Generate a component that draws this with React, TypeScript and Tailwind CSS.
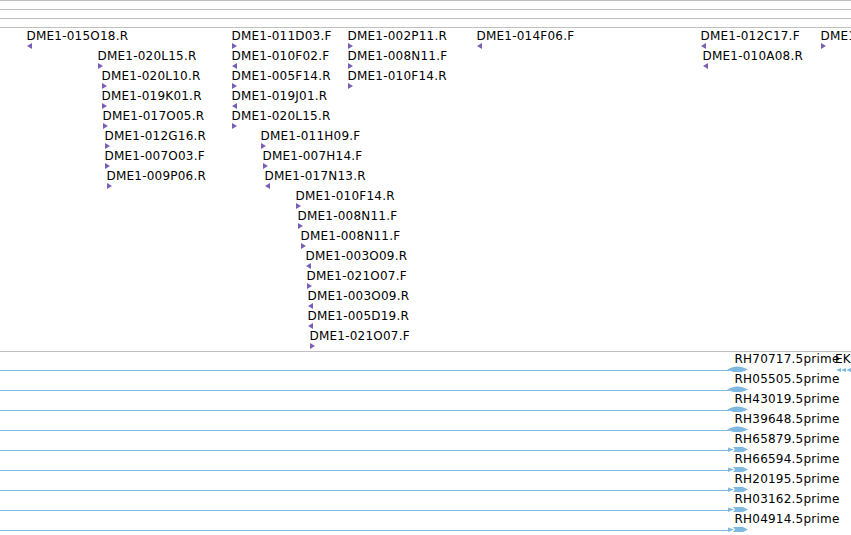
type Dir = 'L' | 'R'
type Clone = { x: number; name: string; dir: Dir }

// clone ends, placed by genome coordinate (x in px on the track canvas)
const cloneRows: Clone[][] = [
  [
    { x: 27, name: 'DME1-015O18.R', dir: 'L' },
    { x: 232, name: 'DME1-011D03.F', dir: 'R' },
    { x: 348, name: 'DME1-002P11.R', dir: 'R' },
    { x: 477, name: 'DME1-014F06.F', dir: 'L' },
    { x: 701, name: 'DME1-012C17.F', dir: 'L' },
    { x: 821, name: 'DME1-018B09.F', dir: 'R' },
  ],
  [
    { x: 98, name: 'DME1-020L15.R', dir: 'R' },
    { x: 232, name: 'DME1-010F02.F', dir: 'L' },
    { x: 348, name: 'DME1-008N11.F', dir: 'R' },
    { x: 703, name: 'DME1-010A08.R', dir: 'L' },
  ],
  [
    { x: 102, name: 'DME1-020L10.R', dir: 'R' },
    { x: 232, name: 'DME1-005F14.R', dir: 'R' },
    { x: 348, name: 'DME1-010F14.R', dir: 'R' },
  ],
  [
    { x: 102, name: 'DME1-019K01.R', dir: 'R' },
    { x: 232, name: 'DME1-019J01.R', dir: 'L' },
  ],
  [
    { x: 103, name: 'DME1-017O05.R', dir: 'R' },
    { x: 232, name: 'DME1-020L15.R', dir: 'R' },
  ],
  [
    { x: 105, name: 'DME1-012G16.R', dir: 'R' },
    { x: 261, name: 'DME1-011H09.F', dir: 'R' },
  ],
  [
    { x: 105, name: 'DME1-007O03.F', dir: 'R' },
    { x: 263, name: 'DME1-007H14.F', dir: 'R' },
  ],
  [
    { x: 107, name: 'DME1-009P06.R', dir: 'R' },
    { x: 265, name: 'DME1-017N13.R', dir: 'L' },
  ],
  [{ x: 296, name: 'DME1-010F14.R', dir: 'R' }],
  [{ x: 298, name: 'DME1-008N11.F', dir: 'R' }],
  [{ x: 301, name: 'DME1-008N11.F', dir: 'R' }],
  [{ x: 306, name: 'DME1-003O09.R', dir: 'L' }],
  [{ x: 307, name: 'DME1-021O07.F', dir: 'R' }],
  [{ x: 308, name: 'DME1-003O09.R', dir: 'L' }],
  [{ x: 308, name: 'DME1-005D19.R', dir: 'L' }],
  [{ x: 310, name: 'DME1-021O07.F', dir: 'R' }],
]

const ests: { name: string; shape: 'lens' | 'arrow' }[] = [
  { name: 'RH70717.5prime', shape: 'lens' },
  { name: 'RH05505.5prime', shape: 'lens' },
  { name: 'RH43019.5prime', shape: 'lens' },
  { name: 'RH39648.5prime', shape: 'lens' },
  { name: 'RH65879.5prime', shape: 'arrow' },
  { name: 'RH66594.5prime', shape: 'arrow' },
  { name: 'RH20195.5prime', shape: 'arrow' },
  { name: 'RH03162.5prime', shape: 'arrow' },
  { name: 'RH04914.5prime', shape: 'arrow' },
]

const font = { fontFamily: '"DejaVu Sans", Verdana, sans-serif' }
const label = 'absolute whitespace-nowrap text-[12px] leading-[14px] tracking-[0.22px] text-black'

function Tri({ x, dir }: { x: number; dir: Dir }) {
  return (
    <svg width="6" height="6" viewBox="0 0 6 6" className="absolute top-[15px]" style={{ left: x }}>
      <polygon points={dir === 'R' ? '0,0 5,3 0,6' : '5,0 0,3 5,6'} fill="#7a5fb9" />
    </svg>
  )
}

function CloneRow({ clones }: { clones: Clone[] }) {
  return (
    <div className="relative h-[20px]">
      {clones.map((c, i) => (
        <div key={i}>
          <span className={`${label} top-[1px]`} style={{ left: c.x - 0.5 }}>
            {c.name}
          </span>
          <Tri x={c.x} dir={c.dir} />
        </div>
      ))}
    </div>
  )
}

function EstRow({ name, shape, first }: { name: string; shape: 'lens' | 'arrow'; first: boolean }) {
  return (
    <div className="relative h-[20px]">
      <svg width="851" height="20" className="absolute left-0 top-0">
        <rect x="0" y="18" width="729" height="1" fill="#80b9e0" />
        {shape === 'lens' ? (
          <path d="M727 17.5 Q733 14.5 737.5 14.5 Q742 14.5 748 17.5 Q742 20.5 737.5 20.5 Q733 20.5 727 17.5 Z" fill="#80b9e0" />
        ) : (
          <>
            <polygon points="728,15.5 734,17.5 728,20" fill="#80b9e0" />
            <polygon points="733,15 743,15 748,17.5 743,20 733,20 735,17.5" fill="#80b9e0" />
          </>
        )}
        {first && (
          <>
            <polygon points="836,18 841,16 841,20" fill="#80b9e0" />
            <polygon points="841,18 846,16 846,20" fill="#80b9e0" />
            <polygon points="846,18 851,16 851,20" fill="#80b9e0" />
          </>
        )}
      </svg>
      <span className={`${label} left-[734.5px] top-0`}>{name}</span>
      {first && <span className={`${label} left-[835px] top-0`}>EK385201</span>}
    </div>
  )
}

export default function App() {
  return (
    <div className="h-[535px] w-[851px] overflow-hidden bg-white" style={font}>
      <div className="h-[9px] border-t border-[#c0c0c0]" />
      <div className="h-[9px] border-t border-[#c0c0c0]" />
      <div className="h-[9px] border-t border-[#c0c0c0]" />
      <div className="h-[324px] border-t border-[#c0c0c0]">
        {cloneRows.map((row, i) => (
          <CloneRow key={i} clones={row} />
        ))}
      </div>
      <div className="border-t border-[#c0c0c0]">
        {ests.map((e, i) => (
          <EstRow key={i} name={e.name} shape={e.shape} first={i === 0} />
        ))}
      </div>
    </div>
  )
}
